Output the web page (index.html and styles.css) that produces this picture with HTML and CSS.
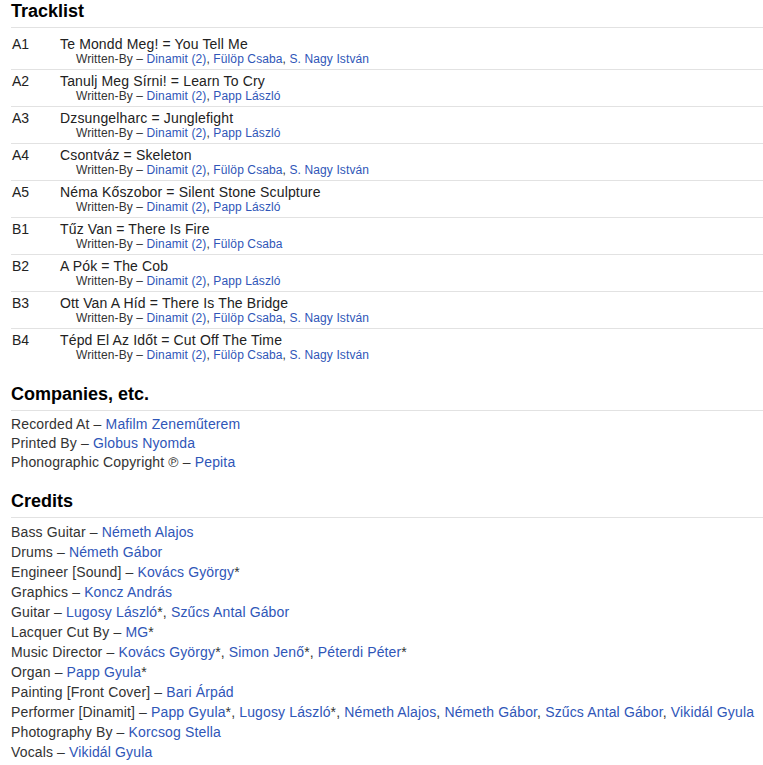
FILE: index.html
```html
<!DOCTYPE html>
<html lang="en">
<head>
    <meta charset="UTF-8">
    <meta name="viewport" content="width=device-width, initial-scale=1.0">
    <title>Dinamit – Tracklist &amp; Credits</title>
    <link rel="stylesheet" href="styles.css">
</head>
<body>
    <div class="page">
        <section class="section">
            <h2 class="section-title">Tracklist</h2>
            <table class="tracklist">
                <tr class="track">
                    <td class="pos">A1</td>
                    <td class="info">
                        <div class="title">Te Mondd Meg! = You Tell Me</div>
                        <div class="extra">Written-By – <a href="#">Dinamit (2)</a>, <a href="#">Fülöp Csaba</a>, <a href="#">S. Nagy István</a></div>
                    </td>
                </tr>
                <tr class="track">
                    <td class="pos">A2</td>
                    <td class="info">
                        <div class="title">Tanulj Meg Sírni! = Learn To Cry</div>
                        <div class="extra">Written-By – <a href="#">Dinamit (2)</a>, <a href="#">Papp László</a></div>
                    </td>
                </tr>
                <tr class="track">
                    <td class="pos">A3</td>
                    <td class="info">
                        <div class="title">Dzsungelharc = Junglefight</div>
                        <div class="extra">Written-By – <a href="#">Dinamit (2)</a>, <a href="#">Papp László</a></div>
                    </td>
                </tr>
                <tr class="track">
                    <td class="pos">A4</td>
                    <td class="info">
                        <div class="title">Csontváz = Skeleton</div>
                        <div class="extra">Written-By – <a href="#">Dinamit (2)</a>, <a href="#">Fülöp Csaba</a>, <a href="#">S. Nagy István</a></div>
                    </td>
                </tr>
                <tr class="track">
                    <td class="pos">A5</td>
                    <td class="info">
                        <div class="title">Néma Kőszobor = Silent Stone Sculpture</div>
                        <div class="extra">Written-By – <a href="#">Dinamit (2)</a>, <a href="#">Papp László</a></div>
                    </td>
                </tr>
                <tr class="track">
                    <td class="pos">B1</td>
                    <td class="info">
                        <div class="title">Tűz Van = There Is Fire</div>
                        <div class="extra">Written-By – <a href="#">Dinamit (2)</a>, <a href="#">Fülöp Csaba</a></div>
                    </td>
                </tr>
                <tr class="track">
                    <td class="pos">B2</td>
                    <td class="info">
                        <div class="title">A Pók = The Cob</div>
                        <div class="extra">Written-By – <a href="#">Dinamit (2)</a>, <a href="#">Papp László</a></div>
                    </td>
                </tr>
                <tr class="track">
                    <td class="pos">B3</td>
                    <td class="info">
                        <div class="title">Ott Van A Híd = There Is The Bridge</div>
                        <div class="extra">Written-By – <a href="#">Dinamit (2)</a>, <a href="#">Fülöp Csaba</a>, <a href="#">S. Nagy István</a></div>
                    </td>
                </tr>
                <tr class="track">
                    <td class="pos">B4</td>
                    <td class="info">
                        <div class="title">Tépd El Az Időt = Cut Off The Time</div>
                        <div class="extra">Written-By – <a href="#">Dinamit (2)</a>, <a href="#">Fülöp Csaba</a>, <a href="#">S. Nagy István</a></div>
                    </td>
                </tr>
            </table>
        </section>

        <section class="section">
            <h2 class="section-title">Companies, etc.</h2>
            <ul class="list companies">
                <li>Recorded At – <a href="#">Mafilm Zeneműterem</a></li>
                <li>Printed By – <a href="#">Globus Nyomda</a></li>
                <li>Phonographic Copyright ℗ – <a href="#">Pepita</a></li>
            </ul>
        </section>

        <section class="section">
            <h2 class="section-title">Credits</h2>
            <ul class="list credits">
                <li>Bass Guitar – <a href="#">Németh Alajos</a></li>
                <li>Drums – <a href="#">Németh Gábor</a></li>
                <li>Engineer [Sound] – <a href="#">Kovács György</a>*</li>
                <li>Graphics – <a href="#">Koncz András</a></li>
                <li>Guitar – <a href="#">Lugosy László</a>*, <a href="#">Szűcs Antal Gábor</a></li>
                <li>Lacquer Cut By – <a href="#">MG</a>*</li>
                <li>Music Director – <a href="#">Kovács György</a>*, <a href="#">Simon Jenő</a>*, <a href="#">Péterdi Péter</a>*</li>
                <li>Organ – <a href="#">Papp Gyula</a>*</li>
                <li>Painting [Front Cover] – <a href="#">Bari Árpád</a></li>
                <li>Performer [Dinamit] – <a href="#">Papp Gyula</a>*, <a href="#">Lugosy László</a>*, <a href="#">Németh Alajos</a>, <a href="#">Németh Gábor</a>, <a href="#">Szűcs Antal Gábor</a>, <a href="#">Vikidál Gyula</a></li>
                <li>Photography By – <a href="#">Korcsog Stella</a></li>
                <li>Vocals – <a href="#">Vikidál Gyula</a></li>
            </ul>
        </section>
    </div>
</body>
</html>
```

FILE: styles.css
```css
body {
    font-family: "Liberation Sans", Arial, sans-serif;
    margin: 0;
    padding: 0;
    background: #fff;
    color: #333;
}

a {
    color: #2f56b8;
    text-decoration: none;
}

.page {
    padding: 0 0 0 11px;
}

.section {
    margin-bottom: 18px;
}

.section-title {
    margin: 0;
    padding: 1px 0 6px;
    font-size: 18px;
    line-height: 20px;
    font-weight: bold;
    color: #000;
    border-bottom: 1px solid #e2e2e2;
}

.tracklist {
    width: 100%;
    border-collapse: collapse;
    margin-top: 5px;
}

.track td {
    padding: 3px 0 3px;
    vertical-align: top;
    border-bottom: 1px solid #e2e2e2;
}

.track:last-child td {
    border-bottom: none;
}

.pos {
    width: 48px;
    padding-left: 1px !important;
    font-size: 14px;
    line-height: 16px;
    color: #222;
}

.title {
    font-size: 14px;
    line-height: 16px;
    letter-spacing: 0.15px;
    color: #222;
}

.extra {
    padding-left: 16px;
    font-size: 12px;
    line-height: 14px;
    letter-spacing: 0.11px;
    color: #333;
}

.list {
    list-style: none;
    margin: 0;
    padding: 4px 0 0;
    font-size: 14px;
    letter-spacing: 0.14px;
}

.companies li {
    line-height: 19px;
}

.credits li {
    line-height: 20px;
}
```
